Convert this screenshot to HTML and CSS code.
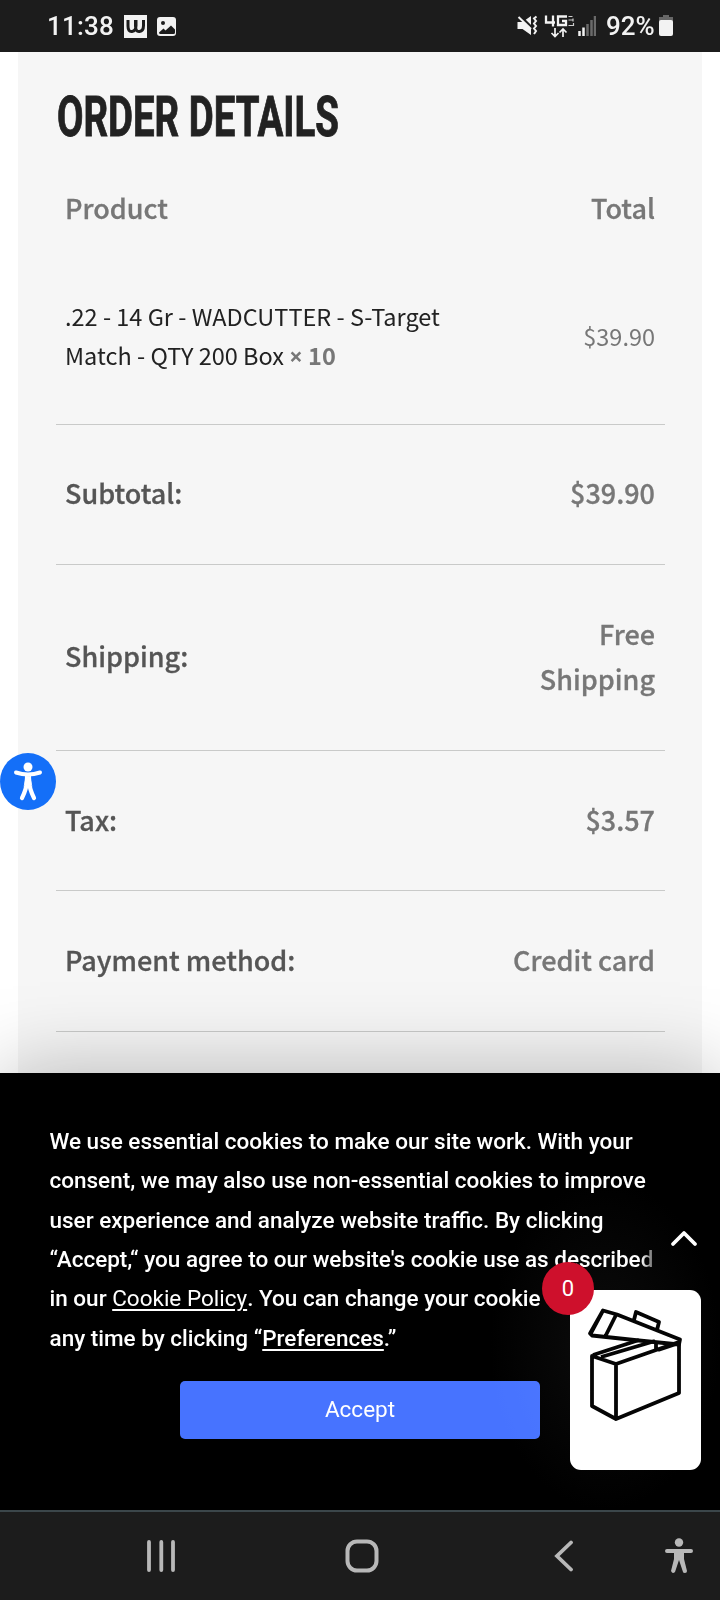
FILE: index.html
```html
<!DOCTYPE html>
<html lang="en">
<head>
<meta charset="utf-8">
<title>Order details</title>
<link rel="stylesheet" href="styles.css">
</head>
<body>
<div class="screen">
  <header class="status">
    <span class="time">11:38</span>
    <span class="app-badge">
      <svg width="23" height="23" viewBox="0 0 23 23"><path d="M0 0h23v23H0z" fill="#f2f2f2"/><path d="M4 5v6q0 6 4 5.500q4-.5 4-6V5M11.500 5v6q0 6 4 5.500q4-.5 4-6V5" fill="none" stroke="#1c1c1c" stroke-width="3"/></svg>
    </span>
    <svg class="photo" width="19" height="19" viewBox="0 0 19 19"><rect width="19" height="19" rx="3" fill="#f2f2f2"/><circle cx="6" cy="6" r="2" fill="#1c1c1c"/><path d="M2 15.500l4.500-4 2 2 5.500-5 4 4v3q0 1.500-1.500 1.500H3.500Q2 17 2 15.500z" fill="#1c1c1c"/></svg>
    <div class="status-right">
      <svg width="80" height="24" viewBox="516 14 80 24">
        <path d="M517.500 22h5l8.500-6v19l-8.500-6h-5z" fill="#f2f2f2"/>
        <path d="M518 14l14 14" stroke="#1c1c1c" stroke-width="3"/><path d="M518.500 17l12.500 12" stroke="#f2f2f2" stroke-width="2"/>
        <path d="M536.500 16.500l-2.500 2 2 2.500-2 2.500 2 2.500-2 2.500 2 2.500-2 3" fill="none" stroke="#f2f2f2" stroke-width="2"/>
        <path d="M546 15.500v7h9M553 15.500v11M567 16.500h-9v8.500h8v-4h-4" fill="none" stroke="#f2f2f2" stroke-width="2.300"/>
        <path d="M568.500 16.500h4M568.500 20h5M573 18.500v3M568.500 25.500h5v-2.500" fill="none" stroke="#ccc" stroke-width="1.200"/>
        <path d="M555 28v8M551.500 33l3.500 3.500 3.500-3.500M563 37v-8M559.500 32.500l3.500-3.500 3.500 3.500" fill="none" stroke="#f2f2f2" stroke-width="1.700"/>
        <path d="M579.500 31v5M583.500 27.500v8.500" stroke="#f2f2f2" stroke-width="2.500"/>
        <path d="M587.500 24v12M591.500 20v16M595 16v20" stroke="#6a6a6a" stroke-width="2.500"/>
      </svg>
      <span class="percent">92%</span>
      <svg width="14" height="22" viewBox="0 0 14 22"><path d="M4 0h6v2h4v5H0V2h4z" fill="#666"/><rect y="5" width="14" height="16" rx="2" fill="#f2f2f2"/></svg>
    </div>
  </header>

  <main class="panel">
    <h1><span>ORDER DETAILS</span></h1>
    <div class="row head"><span>Product</span><span>Total</span></div>
    <div class="row item">
      <div class="name"><div class="l1">.22 - 14 Gr - WADCUTTER - S-Target</div><div class="l2">Match - QTY 200 Box <b><span class="times">×</span> 10</b></div></div>
      <span class="price">$39.90</span>
    </div>
    <div class="row sum"><strong>Subtotal:</strong><span>$39.90</span></div>
    <div class="row sum tall"><strong>Shipping:</strong><span>Free<br>Shipping</span></div>
    <div class="row sum tax"><strong>Tax:</strong><span>$3.57</span></div>
    <div class="row sum last"><strong>Payment method:</strong><span>Credit card</span></div>
  </main>

  <section class="cookie">
    <p>We use essential cookies to make our site work. With your<br>consent, we may also use non-essential cookies to improve<br>user experience and analyze website traffic. By clicking<br>“Accept,“ you agree to our website's cookie use as describe<span class="fade">d</span><br>in our <a class="light">Cookie Policy</a>. You can change your cookie<br>any time by clicking “<a>Preferences</a>.”</p>
    <button>Accept</button>
  </section>

  <nav class="nav">
    <svg class="recents" width="28" height="32" viewBox="0 0 28 32"><path d="M2 2v28M14.300 2v28M26 2v28" stroke="#b8b8b8" stroke-width="3.800" stroke-linecap="round"/></svg>
    <svg class="home" width="34" height="34" viewBox="0 0 34 34"><rect x="2.500" y="2.500" width="29" height="29" rx="9.500" fill="none" stroke="#b8b8b8" stroke-width="4"/></svg>
    <svg class="back" width="19" height="32" viewBox="0 0 19 32"><path d="M17 2.500L3 16l14 13.500" fill="none" stroke="#b8b8b8" stroke-width="3.800" stroke-linecap="round"/></svg>
    <svg class="person" width="30" height="36" viewBox="0 0 30 36"><circle cx="15" cy="4.500" r="4.200" fill="#b8b8b8"/><path d="M3 11h24q2 0 2 2t-2 2h-7v6l3 12q0 2-2 2t-2-1l-4-12-4 12q-1 1-2 1t-2-2l3-12v-6H3q-2 0-2-2t2-2z" fill="#b8b8b8"/></svg>
  </nav>

  <div class="access">
    <svg width="56" height="57" viewBox="0 0 56 57"><ellipse cx="28" cy="28.500" rx="28" ry="28.500" fill="#146ff8"/><circle cx="28" cy="14" r="4.500" fill="#fff"/><path d="M16 19.500q12 4 24 0M28 23v9" fill="none" stroke="#fff" stroke-width="4" stroke-linecap="round"/><path d="M25.500 21h5.500q0 8 1.500 13M31 21h-6q0 8-1.500 13" fill="#fff"/><path d="M27 28q-.5 8-5 17M29 28q.5 8 5 17" fill="none" stroke="#fff" stroke-width="4.200" stroke-linecap="round"/></svg>
  </div>
  <div class="glow"></div>
  <svg class="to-top" width="28" height="18" viewBox="0 0 28 18"><path d="M3 15L14 4l11 11" fill="none" stroke="#fff" stroke-width="3.800" stroke-linecap="round" stroke-linejoin="round"/></svg>
  <div class="cart">
    <svg width="131" height="180" viewBox="570 1290 131 180">
      <g fill="none" stroke="#050505" stroke-width="3.800" stroke-linejoin="round"><path d="M592 1356l24 8 63-22v51l-63 26-24-13zM616 1364v55M593 1355l46-15M601 1357l54-16M656 1342v9M658 1350l21-7"/><path d="M603 1310.500l14 4 63 25-1 5-40-4-47-5-2-2zM616 1315l-11 22M603 1310.500l-12 22.500M634 1320l2-8 23 10-2 8"/></g>
    </svg>
    <span class="count">0</span>
  </div>
</div>
</body>
</html>
```
FILE: styles.css
```css
* { box-sizing: border-box; }
body { margin: 0; background: #fff; }
svg { display: block; flex: none; }
.screen { position: relative; width: 720px; height: 1600px; overflow: hidden; display: flex; flex-direction: column; }
.status { height: 52px; flex: none; background: #1c1c1c; color: #f2f2f2; display: flex; align-items: center; padding: 0 47px 0 47px; font: 500 26px/52px Roboto, sans-serif; }
.time { width: 77px; white-space: nowrap; letter-spacing: .2px; }
.photo { margin-left: 10px; }
.status-right { margin-left: auto; display: flex; align-items: center; }
.percent { width: 53px; margin-left: 10px; white-space: nowrap; }
.panel { height: 1021px; flex: none; margin: 0 18px; padding: 0 37px 0 38px; background: #f6f6f6; font-family: "Noto Sans CJK JP", "Noto Sans", sans-serif; color: #777; }
h1 { margin: 0; height: 116px; padding: 37px 0 0 .5px; font: 700 55px/56px Roboto, sans-serif; color: #222; }
h1 span { display: inline-block; white-space: nowrap; transform: scaleX(.698); transform-origin: 0 50%; -webkit-text-stroke: .9px #222; }
.row { display: flex; justify-content: space-between; align-items: center; padding: 0 10px 4px 9px; border-bottom: 1px solid #c9cac9; white-space: nowrap; }
.head { height: 82px; border: 0; font-size: 27px; font-weight: 500; -webkit-text-stroke: .3px; }
.item { height: 175px; padding-bottom: 2px; font-size: 23.500px; line-height: 39px; }
.name { color: #222; }
.name b { color: #777; }
.times { font-family: "Noto Sans", sans-serif; line-height: 1; }
.sum { height: 140px; font-size: 27px; font-weight: 500; line-height: 45px; text-align: right; -webkit-text-stroke: .3px; }
.sum strong { font-weight: 500; color: #555; }
.tall { height: 186px; }
.tax { padding-bottom: 2px; }
.last { height: 141px; }
.cookie { position: relative; height: 437px; flex: none; background: #000; color: #fff; box-shadow: 0 0 80px rgba(0, 0, 0, .27); padding: 49px 0 0 49.500px; font: 500 22.500px/39.350px Roboto, sans-serif; }
.cookie p { margin: 0; height: 259px; white-space: nowrap; }
.cookie a { text-decoration: underline; text-decoration-thickness: 2px; text-underline-offset: 3px; }
.cookie .light { font-weight: 400; }
.fade { color: transparent; background: linear-gradient(90deg, #fff, #666); background-clip: text; -webkit-background-clip: text; }
.cookie button { display: block; width: 360px; height: 58px; margin-left: 130.500px; padding: 0 0 2px; border: 0; border-radius: 5px; background: #4773ff; color: #fff; font: 400 22.500px Roboto, sans-serif; }
.nav { position: relative; height: 90px; flex: none; border-top: 2px solid #3b464a; background: #1c1c1c; display: flex; align-items: center; padding-left: 147px; }
.home { margin-left: 170px; }
.back { margin-left: 175px; }
.person { margin-left: 91px; }
.access { position: absolute; left: 0; top: 753px; }
.glow { position: absolute; right: 0; top: 1180px; width: 230px; height: 330px; background: radial-gradient(closest-side, #0c0c0c, #000); mix-blend-mode: screen; pointer-events: none; }
.to-top { position: absolute; left: 670px; top: 1229px; }
.cart { position: absolute; left: 570px; top: 1290px; width: 131px; height: 180px; border-radius: 11px; background: #fff; }
.count { position: absolute; left: -28px; top: -28px; width: 52px; height: 53px; border-radius: 50%; background: #ce102c; color: #fff; font: 400 22px/53px Roboto, sans-serif; text-align: center; }
```
